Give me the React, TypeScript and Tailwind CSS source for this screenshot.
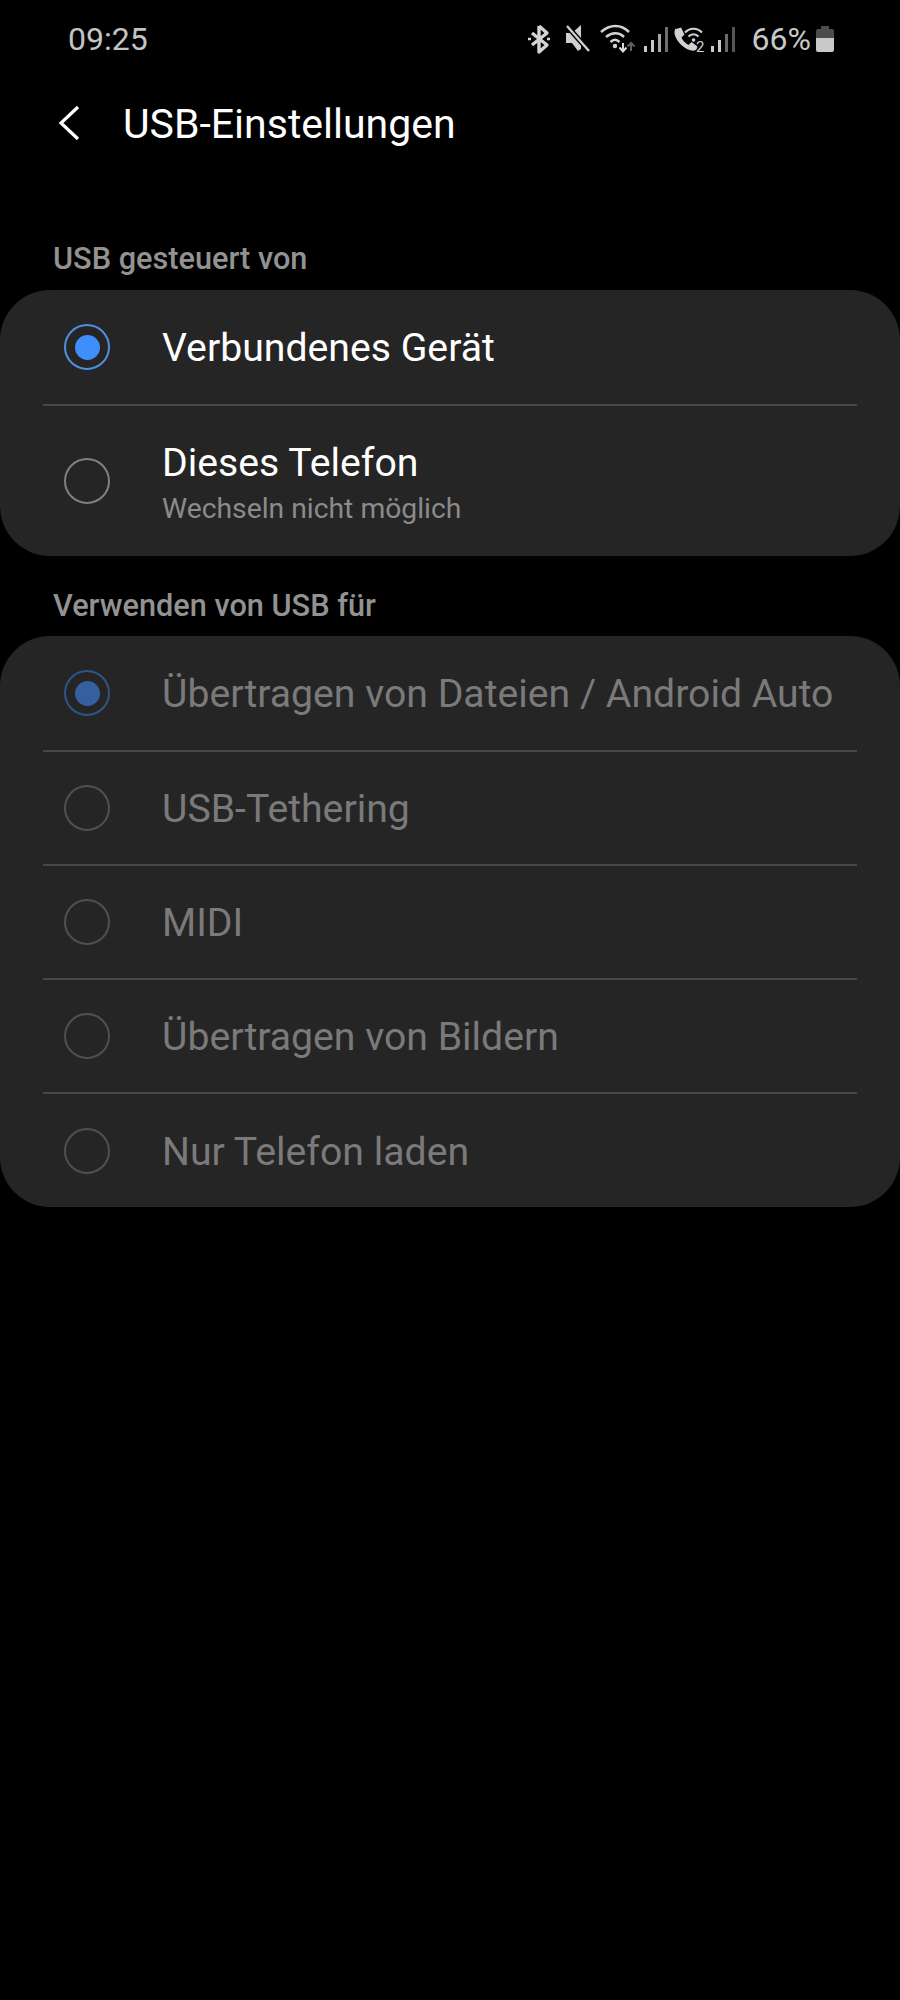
const font = { fontFamily: 'Roboto, sans-serif' };

function SignalBars({ x, fade }: { x: number; fade?: boolean }) {
  return (
    <g fill="#c9c9c9">
      <rect x={x} y="45" width="3" height="6" />
      <rect x={x + 7} y="39" width="3" height="12" />
      <rect x={x + 14} y="33" width="3" height="18" fill={fade ? '#6a6a6a' : '#a8a8a8'} />
      <rect x={x + 21} y="26" width="3" height="25" fill={fade ? '#555555' : '#6e6e6e'} />
    </g>
  );
}

// drawn in page coordinates: the svg starts at x=520, y=20
function StatusIcons() {
  return (
    <svg width="220" height="36" viewBox="520 20 220 36" fill="none">
      {/* bluetooth */}
      <path d="M538 25v26l8-7-15-12M538 25l8 7-15 12" stroke="#d4d4d4" strokeWidth="3.4" strokeLinejoin="round" />
      <path d="M527 38h3M546 38h3" stroke="#d4d4d4" strokeWidth="2.6" />
      {/* muted speaker */}
      <path d="M565 32h6l9-8v24l-3 2-6-8h-6z" fill="#cfcfcf" />
      <path d="M566 25l22 25" stroke="#000" strokeWidth="5" />
      <path d="M566 25l22 25" stroke="#cfcfcf" strokeWidth="2.4" />
      {/* wifi with data arrows */}
      <path d="M600 31c9-8 20-8 28 0M605 36c6-5 13-5 18 0M609.500 41c3-3 6-3 9 0" stroke="#d2d2d2" strokeWidth="2.500" />
      <circle cx="614" cy="45" r="2.200" fill="#d2d2d2" />
      <path d="M622 42v8M618.500 46.500l3.500 4 3.500-4" stroke="#d8d8d8" strokeWidth="2" />
      <path d="M630 50v-8M626.500 45.500l3.500-3.500 3.500 3.500" stroke="#5e5e5e" strokeWidth="2" />
      <SignalBars x={643} />
      {/* wifi calling with sim number */}
      <path d="M675 28l5-1.500 3.500 7-3 3c1 3 4 6 7 7.500l3-3 6 4.500-1 3c-2 1.500-4 1.500-7 .5-7-2.500-12-8-14.500-14.500-1-3-.5-6 1-7.500z" fill="#d2d2d2" />
      <path d="M684 31.500c5-5 12-5 17 0M687.500 35.500c3-3 7-3 10 0" stroke="#d2d2d2" strokeWidth="2.200" />
      <circle cx="692.500" cy="39" r="1.800" fill="#d2d2d2" />
      <text x="695" y="50.500" fontSize="15" fill="#d2d2d2" fontFamily="Roboto, sans-serif">2</text>
      <SignalBars x={710} fade />
    </svg>
  );
}

function Battery() {
  return (
    <svg width="18" height="26" viewBox="0 0 18 26">
      <path d="M5 0h8v3h3a2 2 0 0 1 2 2v7H0V5a2 2 0 0 1 2-2h3z" fill="#4c4c4c" />
      <path d="M0 12h18v12a2 2 0 0 1-2 2H2a2 2 0 0 1-2-2z" fill="#c9c9c9" />
    </svg>
  );
}

function Radio({ selected, disabled }: { selected?: boolean; disabled?: boolean }) {
  let ring = disabled ? 'border-[#505050]' : 'border-[#808080]';
  if (selected) ring = disabled ? 'border-[#2f5487]' : 'border-[#4f8fe0]';
  return (
    <div className={`flex h-[46px] w-[46px] shrink-0 items-center justify-center rounded-full border-2 ${ring}`}>
      {selected && (
        <div className={`h-[25px] w-[25px] rounded-full ${disabled ? 'bg-[#34609f]' : 'bg-[#3e8ffb]'}`} />
      )}
    </div>
  );
}

type RowProps = { title: string; sub?: string; selected?: boolean; disabled?: boolean; last?: boolean; height: string };

function Row({ title, sub, selected, disabled, last, height }: RowProps) {
  return (
    <div className={`flex flex-col ${height}`}>
      <div className="flex flex-1 items-center pl-[64px]">
        <Radio selected={selected} disabled={disabled} />
        <div className={`ml-[52px] flex flex-col ${sub ? 'pt-[5px]' : 'pt-[2px]'}`}>
          <span className={`text-[39.200px] leading-[46px] whitespace-nowrap ${disabled ? 'text-[#7a7a7a]' : 'text-white'}`}>{title}</span>
          {sub && <span className="mt-[5px] text-[28.300px] leading-[36px] text-[#8b8b8b]">{sub}</span>}
        </div>
      </div>
      {!last && <div className="mx-[43px] h-[2px] bg-[#474747]" />}
    </div>
  );
}

export default function App() {
  return (
    <div className="h-[2000px] w-[900px] bg-black" style={font}>
      <div className="flex h-[78px] items-center justify-between pr-[66px] pl-[68px]">
        <span className="text-[32px] text-[#c4c4c4]">09:25</span>
        <div className="flex items-center">
          <StatusIcons />
          <span className="ml-[11px] text-[32px] text-[#c9c9c9]">66%</span>
          <div className="ml-[5px]"><Battery /></div>
        </div>
      </div>
      <div className="flex h-[90px] items-center pl-[58px]">
        <svg width="22" height="36" viewBox="0 0 22 36" fill="none">
          <path d="M20 2L3 18l17 16" stroke="#fff" strokeWidth="3.200" />
        </svg>
        <span className="ml-[43px] pt-[4px] text-[41px] text-white">USB-Einstellungen</span>
      </div>
      <div className="mt-[69px] h-[53px] pl-[53px] text-[30.700px] leading-[44px] font-medium text-[#929292]">USB gesteuert von</div>
      <div className="rounded-[50px] bg-[#252525]">
        <Row title="Verbundenes Gerät" selected height="h-[116px]" />
        <Row title="Dieses Telefon" sub="Wechseln nicht möglich" last height="h-[150px]" />
      </div>
      <div className="mt-[28px] h-[52px] pl-[53px] text-[30.700px] leading-[44px] font-medium text-[#929292]">Verwenden von USB für</div>
      <div className="rounded-[50px] bg-[#252525]">
        <Row title="Übertragen von Dateien / Android Auto" selected disabled height="h-[116px]" />
        <Row title="USB-Tethering" disabled height="h-[114px]" />
        <Row title="MIDI" disabled height="h-[114px]" />
        <Row title="Übertragen von Bildern" disabled height="h-[114px]" />
        <Row title="Nur Telefon laden" disabled last height="h-[113px]" />
      </div>
    </div>
  );
}
